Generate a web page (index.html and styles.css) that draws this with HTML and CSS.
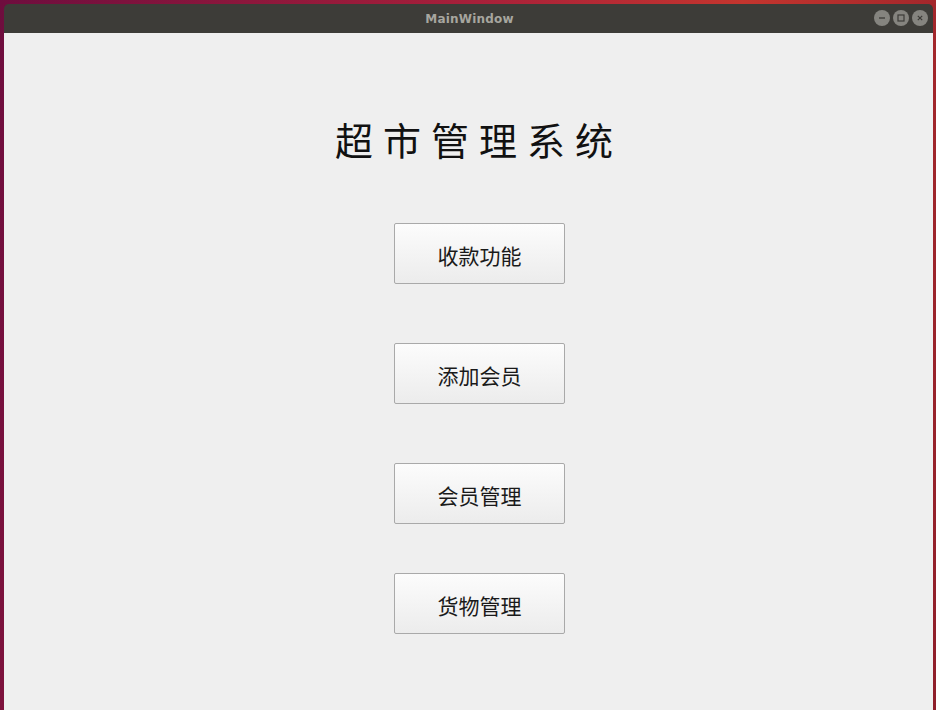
FILE: index.html
```html
<!DOCTYPE html>
<html lang="zh-CN">
<head>
<meta charset="utf-8">
<title>MainWindow</title>
<link rel="stylesheet" href="styles.css">
</head>
<body>
<div class="window">
  <div class="titlebar">
    <span class="title">MainWindow</span>
    <div class="controls">
      <span class="ctl"><svg width="14" height="14" viewBox="0 0 14 14"><line x1="4" y1="7" x2="10" y2="7" stroke="#3c3b37" stroke-width="1.3"/></svg></span>
      <span class="ctl"><svg width="14" height="14" viewBox="0 0 14 14"><rect x="4" y="4" width="6" height="6" fill="none" stroke="#3c3b37" stroke-width="1.2"/></svg></span>
      <span class="ctl"><svg width="14" height="14" viewBox="0 0 14 14"><path d="M4.8 4.8 L9.2 9.2 M9.2 4.8 L4.8 9.2" stroke="#3c3b37" stroke-width="1.2"/></svg></span>
    </div>
  </div>
  <div class="content">
    <h1 class="heading">超市管理系统</h1>
    <div class="buttons">
      <button class="btn">收款功能</button>
      <button class="btn b2">添加会员</button>
      <button class="btn b3">会员管理</button>
      <button class="btn b4">货物管理</button>
    </div>
  </div>
</div>
</body>
</html>
```
FILE: styles.css
```css
html, body {
  margin: 0;
  padding: 0;
  width: 936px;
  height: 710px;
  overflow: hidden;
}
body {
  background: linear-gradient(100deg, #6e0d3e 0%, #a8203a 45%, #c4352e 70%, #8e1e2a 100%);
  font-family: "Noto Sans CJK SC", "Noto Sans", sans-serif;
}
.window {
  margin: 4px 0 0 4px;
  width: 929px;
  height: 706px;
  display: flex;
  flex-direction: column;
}
.titlebar {
  height: 29px;
  background: #3d3c38;
  border-radius: 5px 5px 0 0;
  display: flex;
  align-items: center;
  justify-content: center;
  position: relative;
}
.title {
  color: #a7a69f;
  font-family: "DejaVu Sans", sans-serif;
  font-weight: bold;
  font-size: 12px;
  letter-spacing: 0.2px;
  margin-left: 2px;
}
.controls {
  position: absolute;
  right: 5px;
  top: 6px;
  display: flex;
  gap: 3px;
}
.ctl {
  width: 16px;
  height: 16px;
  border-radius: 50%;
  background: #85847f;
  display: flex;
  align-items: center;
  justify-content: center;
}
.ctl svg { display: block; }
.content {
  flex: 1;
  background: #efefef;
  display: flex;
  flex-direction: column;
}
.heading {
  margin: 82px 0 0 331px;
  font-weight: normal;
  font-size: 38px;
  line-height: 48px;
  letter-spacing: 10px;
  color: #111;
}
.buttons {
  margin: 60px 0 0 390px;
  display: flex;
  flex-direction: column;
}
.btn {
  width: 171px;
  height: 61px;
  border: 1px solid #a9a9a9;
  border-radius: 2px;
  background: linear-gradient(#fcfcfc, #ececec);
  font-family: "Noto Sans CJK SC", "Noto Sans", sans-serif;
  font-size: 21px;
  color: #1a1a1a;
  padding: 3px 0 0 0;
}
.b2, .b3 { margin-top: 59px; }
.b4 { margin-top: 49px; }
```
